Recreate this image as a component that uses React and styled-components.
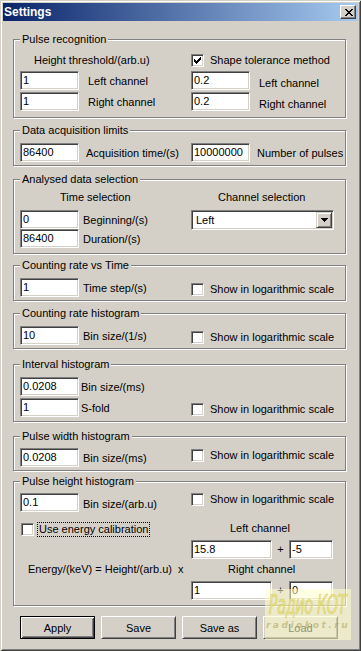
import React from "react";
import styled, { createGlobalStyle } from "styled-components";

const GlobalStyle = createGlobalStyle`
  html, body {
    margin: 0;
    padding: 0;
    background: #d4d0c8;
  }
  body {
    font-family: "Liberation Sans", Arial, sans-serif;
    font-size: 11px;
    color: #000;
  }
`;

const Window = styled.div`
  position: relative;
  width: 361px;
  height: 651px;
  box-sizing: border-box;
  padding: 3px;
  background: #d4d0c8;
  overflow: hidden;
  box-shadow: inset 1px 1px 0 #d4d0c8, inset -1px -1px 0 #404040,
    inset 2px 2px 0 #fff, inset -2px -2px 0 #808080;
`;

const TitleBar = styled.div`
  height: 18px;
  display: flex;
  align-items: center;
  justify-content: space-between;
  padding: 0 2px 0 1px;
  background: linear-gradient(to right, #0a246a, #a6caf0);
`;

const TitleText = styled.span`
  color: #fff;
  font-weight: bold;
  font-size: 12px;
  line-height: 14px;
`;

const CloseButton = styled.div`
  width: 16px;
  height: 14px;
  box-sizing: border-box;
  display: flex;
  align-items: center;
  justify-content: center;
  padding-left: 1px;
  background: #d4d0c8;
  border: 1px solid;
  border-color: #fff #404040 #404040 #fff;
  box-shadow: inset -1px -1px 0 #808080;
`;

const Body = styled.div`
  padding: 0 12px 0 10px;
`;

const Group = styled.div`
  position: relative;
  box-sizing: border-box;
  height: ${(p) => p.$h}px;
  margin-top: ${(p) => p.$mt}px;
  padding: 0 6px;
  border: 1px solid #808080;
  box-shadow: 1px 1px 0 #fff, inset 1px 1px 0 #fff;
`;

const GroupTitle = styled.span`
  position: absolute;
  top: -7px;
  left: 6px;
  padding: 0 2px;
  line-height: 13px;
  background: #d4d0c8;
  white-space: nowrap;
`;

const Row = styled.div`
  display: grid;
  grid-template-columns: 171px 142px;
  align-items: start;
  margin-top: ${(p) => p.$mt}px;
`;

const Text = styled.span`
  display: block;
  line-height: 13px;
  white-space: pre;
  padding-left: ${(p) => p.$pl || 0}px;
`;

const Stack = styled.div`
  display: flex;
  flex-direction: column;
`;

const FieldLine = styled.div`
  display: flex;
  align-items: flex-start;
`;

const Edit = styled.input`
  box-sizing: border-box;
  width: ${(p) => p.$w || 59}px;
  height: 19px;
  margin: 0;
  padding: 1px 2px 3px;
  font: 11px/13px "Liberation Sans", Arial, sans-serif;
  color: #000;
  background: #fff;
  border: 1px solid;
  border-color: #808080 #fff #fff #808080;
  box-shadow: inset 1px 1px 0 #404040, inset -1px -1px 0 #d4d0c8;
  outline: none;
  border-radius: 0;
`;

const Label = styled.span`
  margin-left: ${(p) => p.$gap}px;
  margin-top: ${(p) => p.$dy}px;
  line-height: 13px;
  white-space: nowrap;
`;

const CheckLine = styled.div`
  display: flex;
  align-items: center;
  margin-top: ${(p) => p.$mt || 0}px;
  margin-left: ${(p) => p.$ml || 0}px;
`;

const CheckBox = styled.div`
  width: 13px;
  height: 13px;
  flex: none;
  box-sizing: border-box;
  display: flex;
  align-items: center;
  justify-content: center;
  background: #fff;
  border: 1px solid;
  border-color: #808080 #fff #fff #808080;
  box-shadow: inset 1px 1px 0 #404040, inset -1px -1px 0 #d4d0c8;
`;

const CheckText = styled.span`
  margin-left: ${(p) => (p.$focus ? 3 : 6)}px;
  padding: ${(p) => (p.$focus ? "0 1px" : "0")};
  line-height: 13px;
  white-space: nowrap;
  border: ${(p) => (p.$focus ? "1px dotted #000" : "none")};
`;

const Combo = styled.div`
  box-sizing: border-box;
  width: 143px;
  height: 20px;
  display: flex;
  align-items: center;
  justify-content: space-between;
  padding: 1px;
  background: #fff;
  border: 1px solid;
  border-color: #808080 #fff #fff #808080;
  box-shadow: inset 1px 1px 0 #404040, inset -1px -1px 0 #d4d0c8;
`;

const ComboText = styled.span`
  padding-left: 3px;
  line-height: 13px;
`;

const DropButton = styled.div`
  box-sizing: border-box;
  width: 16px;
  height: 16px;
  display: flex;
  align-items: center;
  justify-content: center;
  background: #d4d0c8;
  border: 1px solid;
  border-color: #d4d0c8 #404040 #404040 #d4d0c8;
  box-shadow: inset 1px 1px 0 #fff, inset -1px -1px 0 #808080;
`;

const Pair = styled.div`
  display: flex;
  align-items: center;
`;

const Plus = styled.span`
  width: 17px;
  text-align: center;
  line-height: 13px;
`;

const ButtonRow = styled.div`
  display: flex;
  gap: 6px;
  margin-top: 10px;
  padding-left: 7px;
`;

const Button = styled.button`
  box-sizing: border-box;
  width: 75px;
  height: 23px;
  margin: 0;
  padding: 0;
  font: 11px "Liberation Sans", Arial, sans-serif;
  color: #000;
  background: #d4d0c8;
  border-radius: 0;
  border: 1px solid;
  border-color: ${(p) => (p.$default ? "#000" : "#fff #404040 #404040 #fff")};
  box-shadow: ${(p) =>
    p.$default
      ? "inset 1px 1px 0 #fff, inset -1px -1px 0 #404040, inset 2px 2px 0 #d4d0c8, inset -2px -2px 0 #808080"
      : "inset 1px 1px 0 #d4d0c8, inset -1px -1px 0 #808080"};
`;

const Watermark = styled.div`
  position: absolute;
  left: 265px;
  top: 589px;
  width: 86px;
  height: 51px;
  display: flex;
  flex-direction: column;
  align-items: center;
  background: rgba(255, 255, 205, 0.55);
  pointer-events: none;
`;

const MarkBig = styled.span`
  font-family: "DejaVu Sans Condensed", "DejaVu Sans", sans-serif;
  font-style: italic;
  font-size: 19px;
  line-height: 30px;
  white-space: nowrap;
  letter-spacing: -0.5px;
  color: rgba(235, 222, 110, 0.75);
  -webkit-text-stroke: 0.5px rgba(200, 190, 90, 0.6);
  transform: scale(0.85, 1.4);
`;

const MarkSmall = styled.span`
  font-family: "DejaVu Sans", sans-serif;
  font-style: italic;
  font-weight: bold;
  font-size: 9px;
  line-height: 12px;
  white-space: nowrap;
  letter-spacing: 2.5px;
  color: rgba(175, 165, 95, 0.6);
`;

const CheckMark = () => (
  <svg width="7" height="7" viewBox="0 0 7 7" shapeRendering="crispEdges">
    <path
      d="M6 0h1v1h-1zM5 1h2v1h-2zM0 2h1v1h-1zM4 2h3v1h-3zM0 3h2v1h-2zM3 3h3v1h-3zM0 4h5v1h-5zM1 5h3v1h-3zM2 6h1v1h-1z"
      fill="#000"
    />
  </svg>
);

const Check = ({ checked, children, focus, mt, ml }) => (
  <CheckLine $mt={mt} $ml={ml}>
    <CheckBox>{checked && <CheckMark />}</CheckBox>
    <CheckText $focus={focus}>{children}</CheckText>
  </CheckLine>
);

const Field = ({ value, label, gap = 4, dy = 4, w }) => (
  <FieldLine>
    <Edit $w={w} defaultValue={value} readOnly />
    {label && (
      <Label $gap={gap} $dy={dy}>
        {label}
      </Label>
    )}
  </FieldLine>
);

const LogScale = ({ mt }) => <Check mt={mt}>Show in logarithmic scale</Check>;

export default function App() {
  return (
    <>
      <GlobalStyle />
      <Window>
        <TitleBar>
          <TitleText>Settings</TitleText>
          <CloseButton>
            <svg width="8" height="7" viewBox="0 0 8 7" shapeRendering="crispEdges">
              <path
                d="M0 0h2v1h-2zM6 0h2v1h-2zM1 1h2v1h-2zM5 1h2v1h-2zM2 2h4v1h-4zM3 3h2v1h-2zM2 4h4v1h-4zM1 5h2v1h-2zM5 5h2v1h-2zM0 6h2v1h-2zM6 6h2v1h-2z"
                fill="#000"
              />
            </svg>
          </CloseButton>
        </TitleBar>

        <Body>
          <Group $mt={18} $h={79}>
            <GroupTitle>Pulse recognition</GroupTitle>
            <Row $mt={14}>
              <Text $pl={14}>Height threshold/(arb.u)</Text>
              <Check checked>Shape tolerance method</Check>
            </Row>
            <Row $mt={4}>
              <Field value="1" label="Left channel" gap={9} />
              <Field value="0.2" label="Left channel" gap={9} dy={6} />
            </Row>
            <Row $mt={2}>
              <Field value="1" label="Right channel" gap={9} />
              <Field value="0.2" label="Right channel" gap={9} dy={6} />
            </Row>
          </Group>

          <Group $mt={12} $h={36}>
            <GroupTitle>Data acquisition limits</GroupTitle>
            <Row $mt={12}>
              <Field value="86400" label="Acquisition time/(s)" gap={7} />
              <Field value="10000000" label="Number of pulses" gap={7} />
            </Row>
          </Group>

          <Group $mt={13} $h={75}>
            <GroupTitle>Analysed data selection</GroupTitle>
            <Row $mt={11}>
              <Text $pl={40}>Time selection</Text>
              <Text $pl={27}>Channel selection</Text>
            </Row>
            <Row $mt={6}>
              <Stack>
                <Field value="0" label="Beginning/(s)" />
                <Field value="86400" label="Duration/(s)" />
              </Stack>
              <Combo>
                <ComboText>Left</ComboText>
                <DropButton>
                  <svg width="7" height="4" viewBox="0 0 7 4" shapeRendering="crispEdges">
                    <path d="M0 0h7v1h-7zM1 1h5v1h-5zM2 2h3v1h-3zM3 3h1v1h-1z" fill="#000" />
                  </svg>
                </DropButton>
              </Combo>
            </Row>
          </Group>

          <Group $mt={11} $h={36}>
            <GroupTitle>Counting rate vs Time</GroupTitle>
            <Row $mt={12}>
              <Field value="1" label="Time step/(s)" />
              <LogScale mt={5} />
            </Row>
          </Group>

          <Group $mt={12} $h={36}>
            <GroupTitle>Counting rate histogram</GroupTitle>
            <Row $mt={12}>
              <Field value="10" label="Bin size/(1/s)" />
              <LogScale mt={5} />
            </Row>
          </Group>

          <Group $mt={15} $h={58}>
            <GroupTitle>Interval histogram</GroupTitle>
            <Row $mt={12}>
              <Field value="0.0208" label="Bin size/(ms)" gap={2} />
            </Row>
            <Row $mt={2}>
              <Field value="1" label="S-fold" gap={2} />
              <LogScale mt={5} />
            </Row>
          </Group>

          <Group $mt={14} $h={35}>
            <GroupTitle>Pulse width histogram</GroupTitle>
            <Row $mt={11}>
              <Field value="0.0208" label="Bin size/(ms)" />
              <LogScale mt={1} />
            </Row>
          </Group>

          <Group $mt={10} $h={125}>
            <GroupTitle>Pulse height histogram</GroupTitle>
            <Row $mt={11}>
              <Field value="0.1" label="Bin size/(arb.u)" dy={5} />
              <LogScale mt={0} />
            </Row>
            <Row $mt={10}>
              <Check focus ml={1}>
                Use energy calibration
              </Check>
              <Text $pl={39}>Left channel</Text>
            </Row>
            <Row $mt={3}>
              <span />
              <Pair>
                <Edit $w={81} defaultValue="15.8" readOnly />
                <Plus>+</Plus>
                <Edit $w={44} defaultValue="-5" readOnly />
              </Pair>
            </Row>
            <Row $mt={4}>
              <Text $pl={8}>{"Energy/(keV) = Height/(arb.u)  x"}</Text>
              <Text $pl={37}>Right channel</Text>
            </Row>
            <Row $mt={5}>
              <span />
              <Pair>
                <Edit $w={81} defaultValue="1" readOnly />
                <Plus>+</Plus>
                <Edit $w={44} defaultValue="0" readOnly />
              </Pair>
            </Row>
          </Group>

          <ButtonRow>
            <Button $default>Apply</Button>
            <Button>Save</Button>
            <Button>Save as</Button>
            <Button>Load</Button>
          </ButtonRow>
        </Body>

        <Watermark>
          <MarkBig>Радио КОТ</MarkBig>
          <MarkSmall>radiokot.ru</MarkSmall>
        </Watermark>
      </Window>
    </>
  );
}
